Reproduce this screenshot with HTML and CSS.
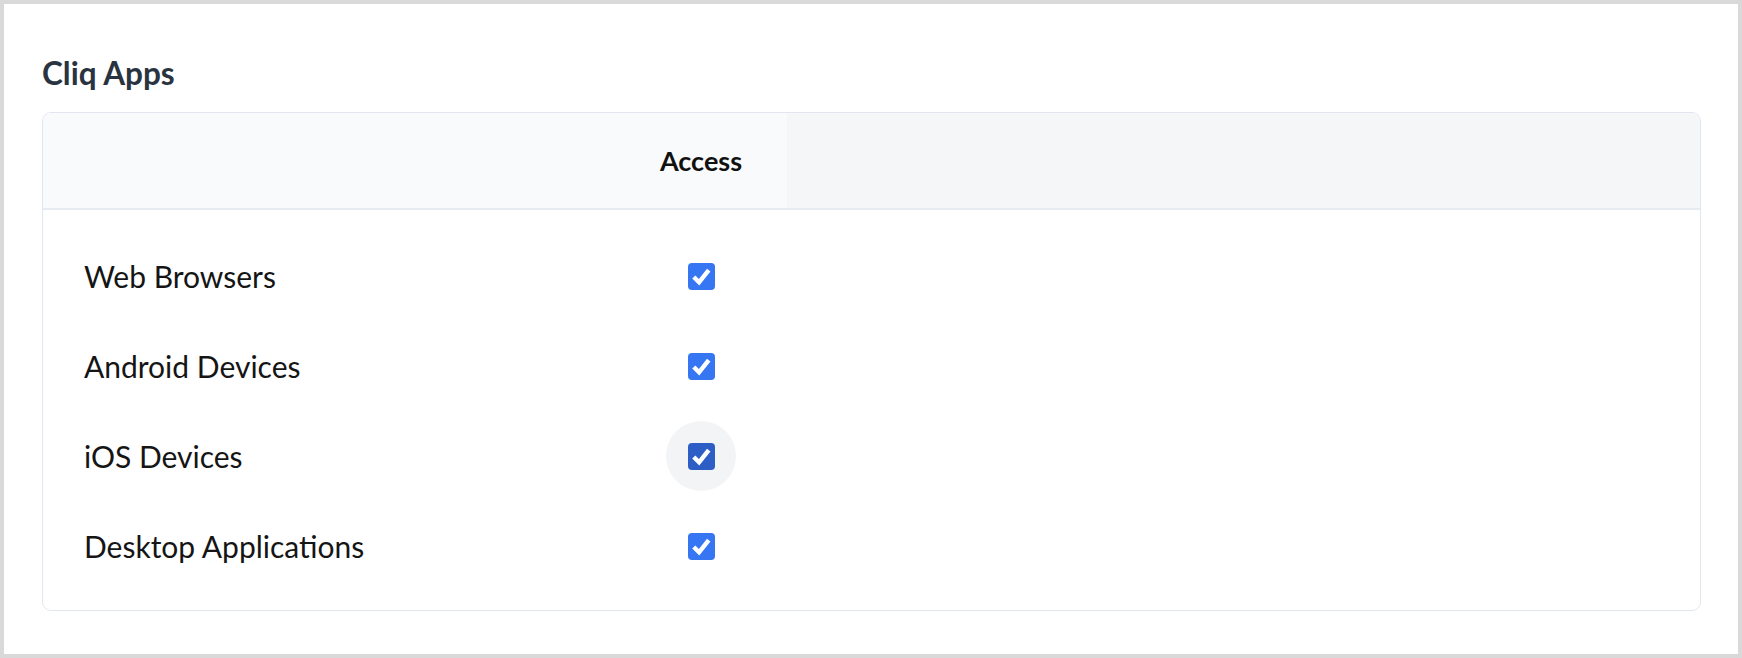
FILE: index.html
```html
<!DOCTYPE html>
<html lang="en">
<head>
<meta charset="utf-8">
<title>Cliq Apps</title>
<link rel="stylesheet" href="styles.css">
</head>
<body>
<main class="panel">
  <h1 class="title">Cliq Apps</h1>
  <div class="card">
    <div class="head">
      <div class="head-main">
        <div class="col-label"></div>
        <div class="col-access head-access">Access</div>
      </div>
      <div class="head-fill"></div>
    </div>
    <div class="body">
      <div class="row">
        <div class="col-label label">Web Browsers</div>
        <div class="col-access"><span class="check"><svg viewBox="0 0 28 28"><path d="M6 14.5 L11.5 20 L21.5 7.5"/></svg></span></div>
      </div>
      <div class="row">
        <div class="col-label label">Android Devices</div>
        <div class="col-access"><span class="check"><svg viewBox="0 0 28 28"><path d="M6 14.5 L11.5 20 L21.5 7.5"/></svg></span></div>
      </div>
      <div class="row">
        <div class="col-label label">iOS Devices</div>
        <div class="col-access"><span class="halo"><span class="check check-focus"><svg viewBox="0 0 28 28"><path d="M6 14.5 L11.5 20 L21.5 7.5"/></svg></span></span></div>
      </div>
      <div class="row">
        <div class="col-label label">Desktop Applications</div>
        <div class="col-access"><span class="check"><svg viewBox="0 0 28 28"><path d="M6 14.5 L11.5 20 L21.5 7.5"/></svg></span></div>
      </div>
    </div>
  </div>
</main>
</body>
</html>
```

FILE: styles.css
```css
* { box-sizing: border-box; }
html, body { margin: 0; padding: 0; }
body {
  background: #d9d9d9;
  padding: 4px;
  height: 658px;
  font-family: Lato, "Noto Sans", sans-serif;
}
.panel {
  background: #ffffff;
  height: 650px;
  width: 1734px;
  padding: 52px 0 0 38px;
}
.title {
  margin: 0;
  font-size: 31.5px;
  font-weight: 700;
  color: #2a3440;
  line-height: 34px;
}
.card {
  margin-top: 22px;
  width: 1659px;
  height: 499px;
  border: 1.5px solid #e2e7ef;
  border-radius: 9px;
  overflow: hidden;
}
.head {
  display: flex;
  height: 97px;
  border-bottom: 2px solid #e6eaf1;
}
.head-main {
  display: flex;
  background: #f9fafc;
}
.head-fill {
  flex: 1;
  background: #f5f6f8;
}
.col-label {
  width: 572px;
  padding-left: 41px;
}
.col-access {
  width: 172px;
  display: flex;
  justify-content: center;
  align-items: center;
}
.head-access {
  font-size: 27px;
  font-weight: 700;
  color: #111111;
}
.body {
  padding: 21px 0 20px;
}
.row {
  display: flex;
  height: 90px;
  align-items: center;
}
.label {
  font-size: 30px;
  color: #151515;
}
.check {
  width: 27px;
  height: 27px;
  border-radius: 4px;
  background: #3676f2;
  display: flex;
}
.check svg {
  width: 27px;
  height: 27px;
  fill: none;
  stroke: #ffffff;
  stroke-width: 4.6;
}
.check-focus { background: #2d5ec6; }
.halo {
  width: 70px;
  height: 70px;
  border-radius: 50%;
  background: #f3f4f6;
  display: flex;
  align-items: center;
  justify-content: center;
}
```
